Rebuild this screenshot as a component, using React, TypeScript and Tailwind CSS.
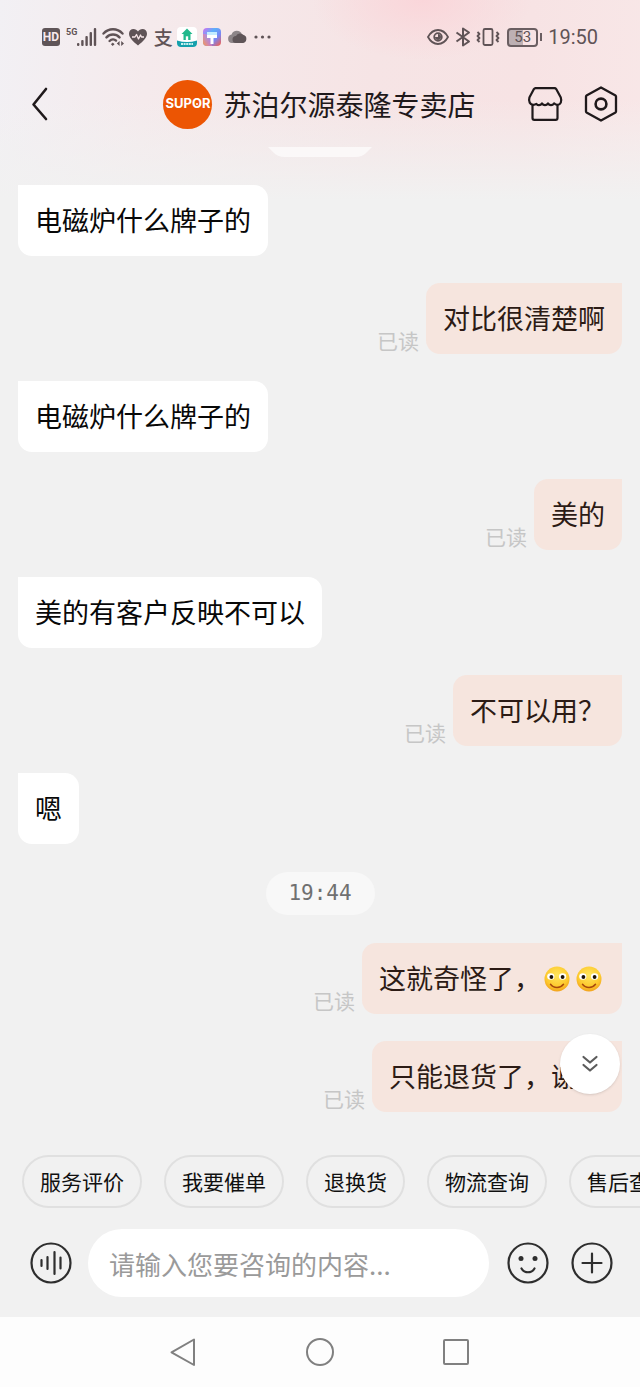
import { ReactNode } from "react";

type Message =
  | { kind: "in"; text: string }
  | { kind: "out"; text: string; smileys?: number }
  | { kind: "time"; text: string };

const messages: Message[] = [
  { kind: "in", text: "电磁炉什么牌子的" },
  { kind: "out", text: "对比很清楚啊" },
  { kind: "in", text: "电磁炉什么牌子的" },
  { kind: "out", text: "美的" },
  { kind: "in", text: "美的有客户反映不可以" },
  { kind: "out", text: "不可以用？" },
  { kind: "in", text: "嗯" },
  { kind: "time", text: "19:44" },
  { kind: "out", text: "这就奇怪了，", smileys: 2 },
  { kind: "out", text: "只能退货了，谢谢" },
];

const quickReplies = ["服务评价", "我要催单", "退换货", "物流查询", "售后查询"];

function Smiley() {
  return (
    <svg viewBox="0 0 26 26" className="mx-[3px] size-[26px] shrink-0">
      <defs>
        <radialGradient id="face" cx="0.5" cy="0.35" r="0.65">
          <stop offset="0" stopColor="#ffe65c" />
          <stop offset="0.7" stopColor="#fdc92e" />
          <stop offset="1" stopColor="#f2a21c" />
        </radialGradient>
      </defs>
      <circle cx="13" cy="13" r="12.5" fill="url(#face)" />
      <ellipse cx="6.8" cy="10.5" rx="3.6" ry="3.3" fill="#fff" />
      <ellipse cx="18.6" cy="10.5" rx="3.6" ry="3.3" fill="#fff" />
      <circle cx="7.4" cy="11" r="1.9" fill="#1c1206" />
      <circle cx="18.6" cy="11" r="1.9" fill="#1c1206" />
      <path d="M6.5 18.3c3 4.2 10 4.2 13 0" fill="none" stroke="#a8480c" strokeWidth="1.5" strokeLinecap="round" />
    </svg>
  );
}

function StatusBar() {
  return (
    <div className="flex h-[74px] items-center justify-between px-[42px] text-[#5f5356]">
      <div className="flex items-center">
        <span className="flex h-[18px] w-[18px] items-center justify-center rounded-[3px] bg-[#5f5558] font-['Roboto',sans-serif] text-[12px] font-bold text-[#f7eaec]">
          HD
        </span>
        <span className="ml-[6px] h-[20px] font-['Roboto',sans-serif] text-[9px] leading-[10px] font-bold">5G</span>
        <svg viewBox="0 0 20 20" className="h-5 w-5" fill="currentColor">
          <rect x="0" y="16" width="2.4" height="3" rx="1" />
          <rect x="4.2" y="13" width="2.4" height="6" rx="1" />
          <rect x="8.4" y="9" width="2.4" height="10" rx="1" />
          <rect x="12.6" y="5" width="2.4" height="14" rx="1" />
          <rect x="16.8" y="1" width="2.4" height="18" rx="1" />
        </svg>
        <svg viewBox="0 0 22 20" className="ml-[5px] h-5 w-[22px]" fill="none" stroke="currentColor" strokeWidth="2.4" strokeLinecap="round">
          <path d="M1.5 6.5c5.2-5.6 13.8-5.6 19 0M4.5 10.4c3.6-3.8 9.4-3.8 13 0M7.6 14c2-2 4.8-2 6.4-.4" />
          <circle cx="10.7" cy="17.3" r="1" fill="currentColor" strokeWidth="1" />
          <path d="M17.6 14 14.8 16.5l2.8 2.5zM19.2 14l2.8 2.5-2.8 2.5z" fill="currentColor" stroke="none" />
        </svg>
        <svg viewBox="0 0 20 18" className="ml-1 h-[18px] w-5">
          <path d="M10 17.5C5.5 13.9 1 10 1 5.8 1 3 3 1 5.5 1 7.4 1 9 2 10 3.6 11 2 12.6 1 14.5 1 17 1 19 3 19 5.8c0 4.2-4.5 8.1-9 11.7z" fill="currentColor" />
          <path d="M4 9h3l1.5-2.5L10.5 11 12.5 7l1 2H16" fill="none" stroke="#f7e6e8" strokeWidth="1.3" strokeLinejoin="round" />
        </svg>
        <span className="ml-[5px] w-5 text-center text-[19px] leading-5 font-medium">支</span>
        <svg viewBox="0 0 20 20" className="ml-1 size-5">
          <rect width="20" height="20" rx="4" fill="#fff" />
          <path d="M10 1.5 4.5 7h2v6h7V7h2z" fill="#22b98c" />
          <path d="M8.8 13V9.3h2.4V13z" fill="#fff" />
          <path d="M0 13.5q10 3 20 0V16a4 4 0 0 1-4 4H4a4 4 0 0 1-4-4z" fill="#14a0ac" />
          <path d="M4 17h12" stroke="#c8f0ee" strokeWidth="2" strokeDasharray="2 .6" />
        </svg>
        <svg viewBox="0 0 18 18" className="ml-[6px] size-[18px]">
          <defs>
            <linearGradient id="brush" x1="0" y1="0" x2="1" y2="1">
              <stop offset="0" stopColor="#d86bf0" />
              <stop offset="0.35" stopColor="#5cb0fa" />
              <stop offset="0.65" stopColor="#7a86f5" />
              <stop offset="1" stopColor="#ff5a3c" />
            </linearGradient>
            <linearGradient id="brushWarm" x1="0" y1="1" x2="0.8" y2="0.3">
              <stop offset="0" stopColor="#ff9a3c" />
              <stop offset="1" stopColor="#f070d8" stopOpacity="0.4" />
            </linearGradient>
          </defs>
          <rect width="18" height="18" rx="4" fill="url(#brush)" />
          <path d="M0 6h9v12H4a4 4 0 0 1-4-4z" fill="url(#brushWarm)" />
          <path d="M4 4h10v3H4z" fill="#c4ecff" />
          <path d="M4 7h10v3h-3.5v6h-3v-6H4z" fill="#fff" />
        </svg>
        <svg viewBox="0 0 20 16" className="ml-[6px] h-4 w-5">
          <path d="M5 14a4.3 4.3 0 0 1-.4-8.5A5.5 5.5 0 0 1 15 5.5 4.3 4.3 0 0 1 15 14z" fill="#8d8588" />
          <path d="M9 14a3.5 3.5 0 0 1 0-7 4.5 4.5 0 0 1 7.5-1A4.1 4.1 0 0 1 15.5 14z" fill="#5f5558" />
        </svg>
        <svg viewBox="0 0 18 4" className="ml-[7px] h-1 w-[18px]" fill="currentColor">
          <circle cx="2" cy="2" r="1.6" />
          <circle cx="8.5" cy="2" r="1.6" />
          <circle cx="15" cy="2" r="1.6" />
        </svg>
      </div>

      <div className="flex items-center">
        <svg viewBox="0 0 22 18" className="h-[18px] w-[22px]" fill="none" stroke="currentColor" strokeWidth="1.8">
          <path d="M1 9c2.5-4.6 6-7 10-7s7.5 2.4 10 7c-2.5 4.6-6 7-10 7S3.5 13.6 1 9z" />
          <circle cx="11" cy="9" r="3.8" />
          <path d="M11 6a3 3 0 1 1-3 3h3z" fill="currentColor" stroke="none" />
        </svg>
        <svg viewBox="0 0 16 20" className="ml-[6px] h-5 w-4" fill="none" stroke="currentColor" strokeWidth="2" strokeLinejoin="round">
          <path d="M1.5 5.5 14 14.5 8 18.5V1.5l6 4L1.5 14.5" />
        </svg>
        <svg viewBox="0 0 24 20" className="ml-[5px] h-5 w-6" fill="none" stroke="currentColor" strokeWidth="1.8" strokeLinejoin="round">
          <rect x="7.5" y="2" width="9" height="16" rx="1.5" />
          <path d="M1.5 5 3.5 7l-2 2 2 2-2 2 2 2M20.5 5l2 2-2 2 2 2-2 2 2 2" />
        </svg>
        <span className="ml-[7px] flex h-[19px] w-[31px] items-center justify-center rounded-[4px] border-2 border-[#6a5e61] bg-[linear-gradient(to_right,#bdb0b3_53%,transparent_53%)] font-['Roboto',sans-serif] text-[15px] leading-none">
          53
        </span>
        <span className="ml-[2px] h-2 w-[2px] bg-[#6a5e61]" />
        <span className="ml-[6px] font-['Roboto',sans-serif] text-[20px]">19:50</span>
      </div>
    </div>
  );
}

function Header() {
  return (
    <header className="flex h-[60px] items-center pr-[21px] pl-[28px] text-[#1f191b]">
      <button aria-label="返回" className="flex h-12 w-6 items-center justify-center">
        <svg viewBox="0 0 18 36" className="h-9 w-[18px]" fill="none" stroke="currentColor" strokeWidth="2.6" strokeLinecap="round" strokeLinejoin="round">
          <path d="M15 3 2.5 18.5 15 33" />
        </svg>
      </button>
      {/* left padding evens out the two buttons so the title sits in the middle */}
      <div className="flex flex-1 items-center justify-center pl-[60px]">
        <span className="flex size-[49px] shrink-0 items-center justify-center rounded-full bg-[#ec5503] font-['Inter',sans-serif] text-[13px] font-bold text-white">
          SUP
          <span className="relative">
            O
            <span className="absolute top-1/2 left-1/2 size-[2px] -translate-1/2 rounded-full bg-white" />
          </span>
          R
        </span>
        <h1 className="ml-[11px] text-[28px] leading-10 whitespace-nowrap">苏泊尔源泰隆专卖店</h1>
      </div>
      <button aria-label="店铺">
        <svg viewBox="0 0 36 36" className="size-9" fill="none" stroke="currentColor" strokeWidth="2.2" strokeLinejoin="round" strokeLinecap="round">
          <path d="M8.500 2.200h19a2 2 0 0 1 1.700.9l4.600 8.500c1.300 3.700-.2 7.200-3.300 7.200-1.600 0-2.700-.5-3.300-1.500-1 1.300-2 1.900-3.200 1.900s-2.200-.6-3-1.700c-.8 1.100-1.800 1.700-3 1.700s-2.200-.6-3-1.700c-.8 1.100-1.800 1.700-3 1.700-1 0-1.800-.4-2.600-1.300-1 .7-2 .9-3.100.9-3.300 0-5-3.400-3.900-7.200l4.500-8.500a2 2 0 0 1 1.600-.9z" />
          <path d="M5.5 19v13a1.8 1.8 0 0 0 1.8 1.8h21.4a1.8 1.8 0 0 0 1.8-1.8V19" />
        </svg>
      </button>
      <button aria-label="设置" className="ml-[20px]">
        <svg viewBox="0 0 36 36" className="size-9" fill="none" stroke="currentColor" strokeWidth="2.3" strokeLinejoin="round">
          <path d="M18 1.5 32.5 9.5a1.5 1.5 0 0 1 .5 1v15a1.5 1.5 0 0 1-.5 1L18 34.5 3.5 26.5a1.5 1.5 0 0 1-.5-1v-15a1.5 1.5 0 0 1 .5-1z" />
          <circle cx="18" cy="18" r="5.4" strokeWidth="2.6" />
        </svg>
      </button>
    </header>
  );
}

function MessageRow({ message }: { message: Message }) {
  if (message.kind === "time") {
    return (
      <li className="my-px flex justify-center">
        <time className="flex h-[43px] w-[109px] items-center justify-center rounded-full bg-[#f8f8f8] font-['DejaVu_Sans_Mono',monospace] text-[21px] text-[#707070]">
          {message.text}
        </time>
      </li>
    );
  }

  if (message.kind === "in") {
    return (
      <li className="flex">
        <p className="flex h-[71px] items-center rounded-[14px] rounded-tl-none bg-white px-[17px] text-[27px] text-[#080808]">
          {message.text}
        </p>
      </li>
    );
  }

  return (
    <li className="flex items-end justify-end gap-[7px]">
      <span className="text-[21px] leading-7 text-[#c6c6c6]">已读</span>
      <p className="flex h-[71px] items-center rounded-[14px] rounded-tr-none bg-[#f6e5de] px-[17px] text-[27px] text-[#2c1b15]">
        {message.text}
        {Array.from({ length: message.smileys ?? 0 }, (_, i) => (
          <Smiley key={i} />
        ))}
      </p>
    </li>
  );
}

function RoundButton({ label, className = "", children }: { label: string; className?: string; children: ReactNode }) {
  return (
    <button aria-label={label} className={`shrink-0 text-[#2e2e2e] ${className}`}>
      <svg viewBox="0 0 42 42" className="size-[42px]" fill="none" stroke="currentColor" strokeWidth="2.2" strokeLinecap="round">
        <circle cx="21" cy="21" r="19.5" />
        {children}
      </svg>
    </button>
  );
}

export default function App() {
  return (
    <div className="flex min-h-screen flex-col overflow-hidden bg-[#f1f1f1] bg-[linear-gradient(to_bottom,transparent_100px,#f1f1f1_200px),radial-gradient(ellipse_110px_60px_at_66%_0,#fad6da,transparent),linear-gradient(95deg,#f2f0f4_0%,#f5eaec_20%,#f6e4e5_50%,#f7e3e4_70%,#f9eaea_100%)] font-['Noto_Sans_CJK_SC',sans-serif]">
      <StatusBar />
      <Header />

      <main className="flex-1">
        <svg viewBox="0 0 104 10" className="mx-auto mt-[13px] h-[10px] w-[104px]">
          <path d="M0 0h104l-5 5q-4 5-12 5H17Q9 10 5 5z" fill="#fff" fillOpacity="0.65" />
        </svg>
        <div className="relative px-[18px] pt-[28px]">
          <ul className="flex flex-col gap-[27px]">
            {messages.map((message, i) => (
              <MessageRow key={i} message={message} />
            ))}
          </ul>
          <button
            aria-label="回到最新消息"
            className="absolute right-[20px] bottom-[18px] flex size-[60px] items-center justify-center rounded-full bg-white text-[#5c5c5c] shadow-sm"
          >
            <svg viewBox="0 0 18 20" className="h-5 w-[18px]" fill="none" stroke="currentColor" strokeWidth="2.2" strokeLinecap="round" strokeLinejoin="round">
              <path d="M2.5 3 9 8.5 15.5 3M2.5 11 9 16.5l6.5-5.5" />
            </svg>
          </button>
        </div>
      </main>

      <footer className="pt-5">
        <div className="flex gap-[22px] overflow-hidden pl-[22px]">
          {quickReplies.map((reply) => (
            <button
              key={reply}
              className="h-[53px] shrink-0 rounded-full border-2 border-[#e0e0e0] px-4 text-[21px] whitespace-nowrap text-[#101010]"
            >
              {reply}
            </button>
          ))}
        </div>

        <div className="mt-[21px] mb-[20px] flex items-center pr-[27px] pl-[30px]">
          <RoundButton label="语音">
            <path d="M11.5 18v6M17.5 15v12M24.5 10v22M30.5 15.5v11" />
          </RoundButton>
          <input
            aria-label="咨询内容"
            placeholder="请输入您要咨询的内容..."
            className="ml-4 h-[68px] min-w-0 flex-1 rounded-full bg-white px-[21px] text-[26px] outline-none placeholder:text-[#9a9a9a]"
          />
          <RoundButton label="表情" className="ml-[18px]">
            <circle cx="14" cy="16.5" r="2.5" fill="currentColor" stroke="none" />
            <circle cx="28" cy="16.5" r="2.5" fill="currentColor" stroke="none" />
            <path d="M14.5 26.5c3 5 10 5 13 0" />
          </RoundButton>
          <RoundButton label="更多" className="ml-[22px]">
            <path d="M21 11.5v19M11.5 21h19" />
          </RoundButton>
        </div>

        <nav className="flex h-[70px] items-center justify-center gap-[108px] bg-[#fdfdfd] text-[#808080]">
          <button aria-label="后退">
            <svg viewBox="0 0 28 28" className="size-7" fill="none" stroke="currentColor" strokeWidth="2" strokeLinejoin="round">
              <path d="M24 1.5v25.500L1.5 14.3z" />
            </svg>
          </button>
          <button aria-label="主屏幕">
            <svg viewBox="0 0 28 28" className="size-7" fill="none" stroke="currentColor" strokeWidth="2">
              <circle cx="14" cy="14" r="13" />
            </svg>
          </button>
          <button aria-label="最近任务">
            <svg viewBox="0 0 28 28" className="size-7" fill="none" stroke="currentColor" strokeWidth="2">
              <rect x="2" y="2" width="24" height="24" rx="1" />
            </svg>
          </button>
        </nav>
      </footer>
    </div>
  );
}
